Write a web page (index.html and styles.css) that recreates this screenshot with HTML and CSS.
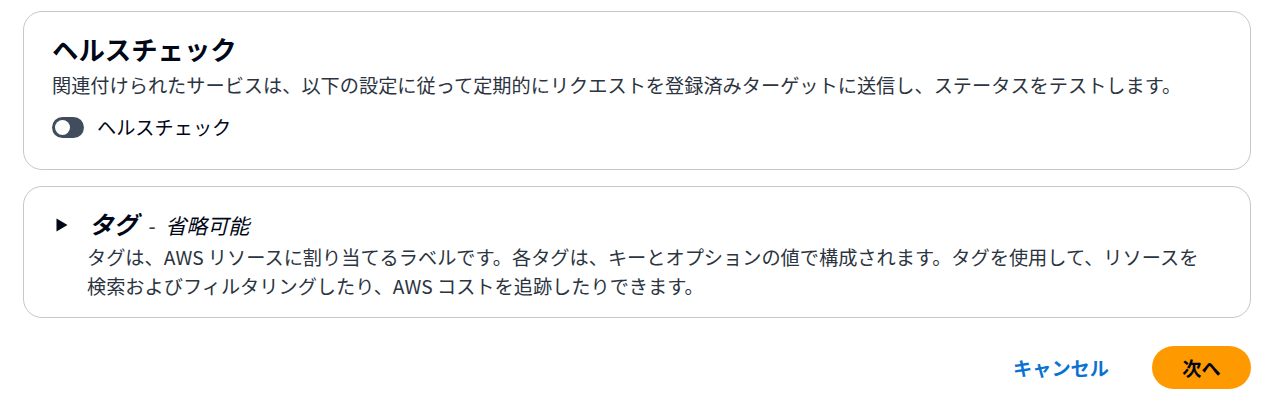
FILE: index.html
```html
<!DOCTYPE html>
<html lang="ja">
<head>
<meta charset="utf-8">
<link rel="stylesheet" href="styles.css">
</head>
<body>
<div class="page">
  <section class="card card-health">
    <h2 class="title">ヘルスチェック</h2>
    <p class="desc desc-health">関連付けられたサービスは、以下の設定に従って定期的にリクエストを登録済みターゲットに送信し、ステータスをテストします。</p>
    <label class="toggle-row">
      <span class="toggle"><span class="knob"></span></span>
      <span class="toggle-label">ヘルスチェック</span>
    </label>
  </section>
  <section class="card card-tags">
    <div class="exp-head">
      <svg class="caret" width="12" height="14" viewBox="0 0 12 14"><polygon points="0.5,0.5 11.5,7 0.5,13.5" fill="#000716"/></svg>
      <h2 class="title title-tags"><span class="title-main">タグ</span><span class="title-opt"><span class="dash">-</span>省略可能</span></h2>
    </div>
    <p class="desc desc-indent">タグは、AWS リソースに割り当てるラベルです。各タグは、キーとオプションの値で構成されます。タグを使用して、リソースを検索およびフィルタリングしたり、AWS コストを追跡したりできます。</p>
  </section>
  <div class="actions">
    <button class="btn-link">キャンセル</button>
    <button class="btn-primary">次へ</button>
  </div>
</div>
</body>
</html>
```
FILE: styles.css
```css
* { box-sizing: border-box; }
html, body { margin: 0; padding: 0; background: #fff; }
body {
  font-family: "Noto Sans CJK JP", "Open Sans", sans-serif;
  color: #000716;
}
.page {
  padding: 11px 11px 0 23px;
  display: flex;
  flex-direction: column;
  gap: 16px;
}
.card {
  border: 1px solid #c6c6cd;
  border-radius: 19px;
  background: #fff;
}
.card-health { height: 159px; padding: 20px 28px 0 28px; }
.card-tags { height: 132px; padding: 20px 28px 0 28px; }
.title {
  margin: 0;
  font-size: 26.4px;
  line-height: 34px;
  font-weight: 700;
}
.desc {
  margin: 0;
  font-size: 19.2px;
  line-height: 28.8px;
  color: #2b3440;
}
.desc-health { margin-top: 5px; }
.toggle-row {
  display: flex;
  align-items: center;
  gap: 13px;
  margin-top: 13px;
  height: 29px;
}
.toggle {
  width: 32px;
  height: 21px;
  border-radius: 11px;
  background: #414d5c;
  position: relative;
  flex: none;
}
.knob {
  position: absolute;
  left: 3px;
  top: 3px;
  width: 15px;
  height: 15px;
  border-radius: 50%;
  background: #fff;
}
.toggle-label { font-size: 19.2px; line-height: 28.8px; color: #000716; }
.exp-head { display: flex; align-items: center; gap: 21px; padding-left: 4px; }
.caret { flex: none; }
.title-tags { display: flex; align-items: baseline; }
.title-main { font-style: italic; font-size: 24.5px; }
.title-opt { font-style: italic; font-weight: 400; font-size: 21px; }
.dash { margin: 0 11px 0 9px; }
.desc-indent { padding-left: 35px; padding-right: 14px; margin-top: 1px; }
.actions {
  display: flex;
  justify-content: flex-end;
  align-items: center;
  gap: 43px;
  margin-top: 12px;
}
.btn-link {
  border: 0; background: none; padding: 0;
  font-family: inherit;
  font-size: 19.2px;
  font-weight: 700;
  color: #0972d3;
}
.btn-primary {
  border: 0;
  background: #ff9900;
  border-radius: 22px;
  width: 99px;
  height: 43px;
  font-family: inherit;
  font-size: 19.2px;
  font-weight: 700;
  color: #000716;
}
```
